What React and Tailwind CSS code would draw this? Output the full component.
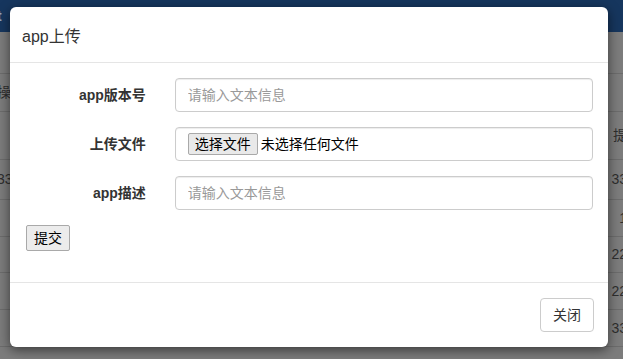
const rows = [
  { left: '', right: '', h: 'h-[42px]' },
  { left: '操', right: '', h: 'h-[38px]' },
  { left: '', right: '提', h: 'h-[48px]' },
  { left: '33', right: '33', h: 'h-[40px]' },
  { left: '', right: '1', h: 'h-[37px]' },
  { left: '', right: '22', h: 'h-[36px]' },
  { left: '', right: '22', h: 'h-[37px]' },
  { left: '', right: '33', h: 'h-[37px]' },
];

function Field({ label, children }) {
  return (
    <div className="flex items-center h-[34px]">
      <label className="w-[120px] text-right text-[14px] font-bold text-[#333]">{label}</label>
      <div className="ml-[29px] w-[419px]">{children}</div>
    </div>
  );
}

export default function App() {
  return (
    <div
      className="relative w-[623px] h-[359px] overflow-hidden bg-[#7c7c7c]"
      style={{ fontFamily: '"Liberation Sans", "Noto Sans CJK SC", sans-serif' }}
    >
      {/* dimmed page behind the modal */}
      <div className="h-[32px] bg-[#16365e] text-[#8fa3bd] text-[14px] font-bold leading-[32px] -ml-[3px]">t</div>
      <div className="flex flex-col">
        {rows.map((r, i) => (
          <div
            key={i}
            className={`${r.h} flex items-center justify-between border-b border-[#6c6c6c] text-[14px] text-[#2e2e2e]`}
          >
            <span className="-ml-[3px]">{r.left}</span>
            <span className="mr-[-4px]">{r.right}</span>
          </div>
        ))}
      </div>

      {/* modal */}
      <div className="absolute left-[10px] top-[7px] w-[598px] h-[340px] bg-white rounded-[6px] shadow-[0_3px_12px_rgba(0,0,0,0.55)] flex flex-col">
        <div className="h-[56px] border-b border-[#e5e5e5] pl-[12px] pr-[15px] flex items-center">
          <h4 className="text-[16px] text-[#333] pt-[5px]">app上传</h4>
        </div>
        <div className="flex-1 pl-[16px] pr-[15px] pt-[15px]">
          <div className="flex flex-col gap-[15px]">
            <Field label="app版本号">
              <input
                placeholder="请输入文本信息"
                className="w-full h-[34px] px-[12px] border border-[#ccc] rounded-[4px] text-[14px] text-[#555] placeholder:text-[#999] shadow-[inset_0_1px_1px_rgba(0,0,0,0.075)] outline-none"
              />
            </Field>
            <Field label="上传文件">
              <div className="w-full h-[34px] px-[12px] border border-[#ccc] rounded-[4px] flex items-center text-[14px] text-[#333] shadow-[inset_0_1px_1px_rgba(0,0,0,0.075)]">
                <span className="h-[22px] px-[6px] leading-[20px] border border-[#a9a9a9] bg-[#e9e9e9] rounded-[2px] text-black">选择文件</span>
                <span className="ml-[3px] text-black">未选择任何文件</span>
              </div>
            </Field>
            <Field label="app描述">
              <input
                placeholder="请输入文本信息"
                className="w-full h-[34px] px-[12px] border border-[#ccc] rounded-[4px] text-[14px] text-[#555] placeholder:text-[#999] shadow-[inset_0_1px_1px_rgba(0,0,0,0.075)] outline-none"
              />
            </Field>
          </div>
          <button className="mt-[15px] h-[26px] px-[7px] border border-[#a9a9a9] bg-[#ececec] rounded-[2px] text-[14px] text-black">
            提交
          </button>
        </div>
        <div className="h-[65px] border-t border-[#e5e5e5] px-[14px] flex items-center justify-end">
          <button className="h-[34px] w-[54px] border border-[#ccc] rounded-[4px] bg-white text-[14px] text-[#333]">关闭</button>
        </div>
      </div>
    </div>
  );
}
